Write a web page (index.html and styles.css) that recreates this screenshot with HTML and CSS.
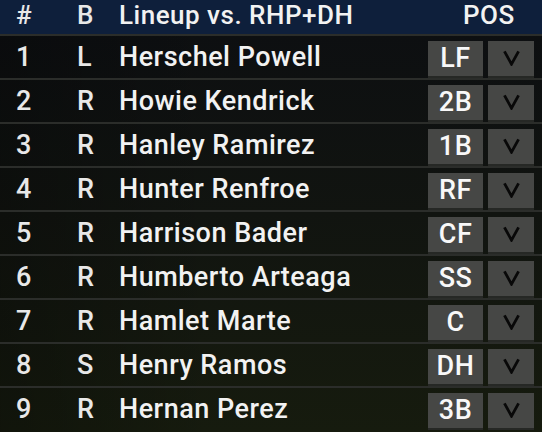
FILE: index.html
```html
<!DOCTYPE html>
<html>
<head>
<meta charset="utf-8">
<link rel="stylesheet" href="styles.css">
</head>
<body>
<div class="lineup">
  <div class="head">
    <span class="c-num">#</span>
    <span class="c-bat">B</span>
    <span class="c-name">Lineup vs. RHP+DH</span>
    <span class="c-pos">POS</span>
  </div>
  <div class="rows">
    <div class="row"><span class="c-num">1</span><span class="c-bat">L</span><span class="c-name">Herschel Powell</span><span class="pos">LF</span><span class="drop"><svg viewBox="0 0 18 17" class="chev"><path d="M1.5 1.5 L9 15 L16.5 1.5"/></svg></span></div>
    <div class="row"><span class="c-num">2</span><span class="c-bat">R</span><span class="c-name">Howie Kendrick</span><span class="pos">2B</span><span class="drop"><svg viewBox="0 0 18 17" class="chev"><path d="M1.5 1.5 L9 15 L16.5 1.5"/></svg></span></div>
    <div class="row"><span class="c-num">3</span><span class="c-bat">R</span><span class="c-name">Hanley Ramirez</span><span class="pos">1B</span><span class="drop"><svg viewBox="0 0 18 17" class="chev"><path d="M1.5 1.5 L9 15 L16.5 1.5"/></svg></span></div>
    <div class="row"><span class="c-num">4</span><span class="c-bat">R</span><span class="c-name">Hunter Renfroe</span><span class="pos">RF</span><span class="drop"><svg viewBox="0 0 18 17" class="chev"><path d="M1.5 1.5 L9 15 L16.5 1.5"/></svg></span></div>
    <div class="row"><span class="c-num">5</span><span class="c-bat">R</span><span class="c-name">Harrison Bader</span><span class="pos">CF</span><span class="drop"><svg viewBox="0 0 18 17" class="chev"><path d="M1.5 1.5 L9 15 L16.5 1.5"/></svg></span></div>
    <div class="row"><span class="c-num">6</span><span class="c-bat">R</span><span class="c-name">Humberto Arteaga</span><span class="pos">SS</span><span class="drop"><svg viewBox="0 0 18 17" class="chev"><path d="M1.5 1.5 L9 15 L16.5 1.5"/></svg></span></div>
    <div class="row"><span class="c-num">7</span><span class="c-bat">R</span><span class="c-name">Hamlet Marte</span><span class="pos">C</span><span class="drop"><svg viewBox="0 0 18 17" class="chev"><path d="M1.5 1.5 L9 15 L16.5 1.5"/></svg></span></div>
    <div class="row"><span class="c-num">8</span><span class="c-bat">S</span><span class="c-name">Henry Ramos</span><span class="pos">DH</span><span class="drop"><svg viewBox="0 0 18 17" class="chev"><path d="M1.5 1.5 L9 15 L16.5 1.5"/></svg></span></div>
    <div class="row"><span class="c-num">9</span><span class="c-bat">R</span><span class="c-name">Hernan Perez</span><span class="pos">3B</span><span class="drop"><svg viewBox="0 0 18 17" class="chev"><path d="M1.5 1.5 L9 15 L16.5 1.5"/></svg></span></div>
  </div>
</div>
</body>
</html>
```
FILE: styles.css
```css
html, body {
  margin: 0;
  padding: 0;
  width: 542px;
  height: 432px;
  overflow: hidden;
  background: #151a0e;
}
.lineup {
  width: 542px;
  height: 432px;
  font-family: Roboto, "Liberation Sans", sans-serif;
  font-weight: 500;
  font-size: 27px;
  letter-spacing: 0.5px;
  color: #f2f2f2;
  display: flex;
  flex-direction: column;
}
.head {
  height: 34px;
  background: #0e1f3b;
  display: grid;
  grid-template-columns: 61px 42px 1fr 79px;
  padding-left: 16px;
  align-items: start;
  font-size: 26px;
  line-height: 31px;
}
.head span {
  display: block;
}
.rows {
  flex: 1;
  background:
    linear-gradient(to right, rgba(0,0,0,0.25), rgba(0,0,0,0) 40%),
    linear-gradient(to bottom, #0d0f11 0%, #111410 45%, #161b0e 100%);
}
.row {
  height: 42px;
  border-top: 2px solid #2b2d2a;
  display: grid;
  grid-template-columns: 61px 42px 1fr 60px 46px;
  padding-left: 16px;
  padding-right: 8px;
  align-items: center;
}
.c-num, .c-bat {
  color: #e8e8e8;
}
.pos {
  width: 55px;
  box-sizing: border-box;
  height: 35px;
  margin-top: 2px;
  background: #464745;
  box-shadow: 0 2px 0 #262825;
  display: flex;
  align-items: center;
  justify-content: center;
  line-height: 1;
  color: #f8f8f8;
}
.drop {
  height: 35px;
  margin-top: 2px;
  background: #464745;
  box-shadow: 0 2px 0 #262825;
  display: flex;
  align-items: center;
  justify-content: center;
}
.chev {
  width: 17px;
  height: 16px;
  fill: none;
  stroke: #080808;
  stroke-width: 3;
}
```
